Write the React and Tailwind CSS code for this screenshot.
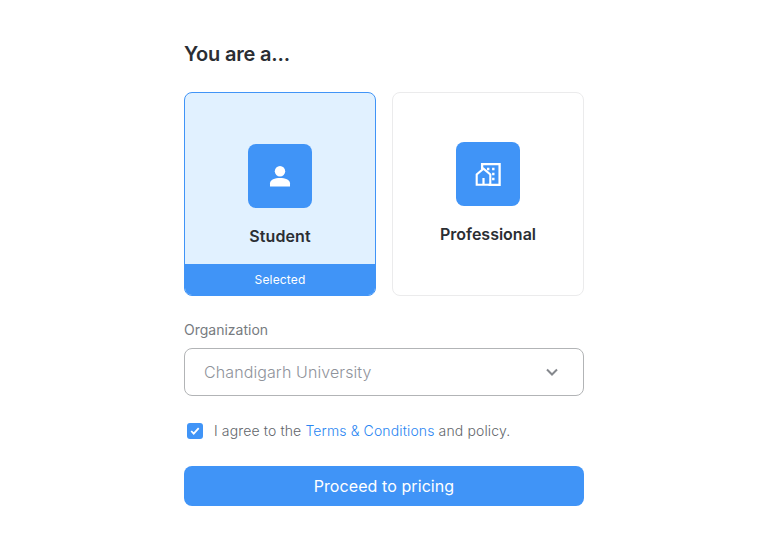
export default function App() {
  return (
    <main className="flex h-[547px] w-[768px] flex-col items-center bg-white pt-[40px] font-['Inter',sans-serif] text-[#2b2e33]">
      <div className="flex w-[400px] flex-col">
        <h1 className="text-[20px] font-semibold leading-[28px] tracking-[-0.2px]">You are a...</h1>
        <div className="mt-[24px] flex gap-4">
          <button className="flex h-[204px] w-[192px] flex-col items-center overflow-hidden rounded-lg border border-[#4094f7] bg-[#e1f1ff]">
            <span className="mt-[51px] flex size-16 shrink-0 items-center justify-center rounded-lg bg-[#4094f7] text-white">
              <svg className="size-8" viewBox="0 0 32 32" fill="currentColor">
                <circle cx="16" cy="11.2" r="5.2" />
                <path d="M6 26.5v-3.2c0-3.8 5-5.4 10-5.4s10 1.6 10 5.4v3.2z" />
              </svg>
            </span>
            <span className="mt-4 text-[16px] font-semibold leading-6 tracking-[0.1px]">Student</span>
            <span className="mt-auto flex h-[31px] w-full items-center justify-center bg-[#4094f7] text-[12px] tracking-[0.15px] text-white">Selected</span>
          </button>
          <button className="flex h-[204px] w-[192px] flex-col items-center rounded-lg border border-[#ebebec] bg-white">
            <span className="mt-[49px] flex size-16 items-center justify-center rounded-lg bg-[#4094f7] text-white">
              <svg className="size-8" viewBox="0 0 32 32" fill="none" stroke="currentColor" strokeWidth="2.3">
                <path d="M10.1 11V6.2h17.5v20.6H16.5" />
                <path d="M4.7 26.7V16.4l6.8-5.7 6.8 5.7v10.3z" strokeWidth="2.1" />
                <path d="M11.5 20v6.5" strokeWidth="2.2" />
                <path d="M15 11h2.4m2.7 0h2.4m-2.4 5h2.4m-2.4 5h2.4" strokeWidth="2.4" />
              </svg>
            </span>
            <span className="mt-4 text-[16px] font-semibold leading-6">Professional</span>
          </button>
        </div>
        <span className="mt-[24px] text-[14px] leading-[20px] text-[#777b80]">Organization</span>
        <button className="mt-[8px] flex h-12 items-center justify-between rounded-lg border border-[#b2b4b6] pl-[19px] pr-[21px] text-[16px] font-light tracking-[0.1px] text-[#8f939b]">
          Chandigarh University
          <svg className="size-5" viewBox="0 0 20 20" fill="none" stroke="#85888d" strokeWidth="2"><path d="m5 7.5 5 5 5-5" /></svg>
        </button>
        <label className="mt-[25px] flex items-center pl-[3px] text-[14px] leading-[20px] text-[#62666b]">
          <span className="mr-[11px] flex size-4 items-center justify-center rounded-[3px] bg-[#4094f7]">
            <svg className="size-3" viewBox="0 0 12 12" fill="none" stroke="white" strokeWidth="1.8"><path d="m2.2 6 2.5 2.6 5-5.4" /></svg>
          </span>
          <span className="font-light tracking-[0.13px]">I agree to the <a className="text-[#2a86f2]">Terms &amp; Conditions</a> and policy.</span>
        </label>
        <button className="mt-[25px] h-10 rounded-lg bg-[#4094f7] text-[16px] font-normal tracking-[0.08px] text-white">Proceed to pricing</button>
      </div>
    </main>
  );
}
